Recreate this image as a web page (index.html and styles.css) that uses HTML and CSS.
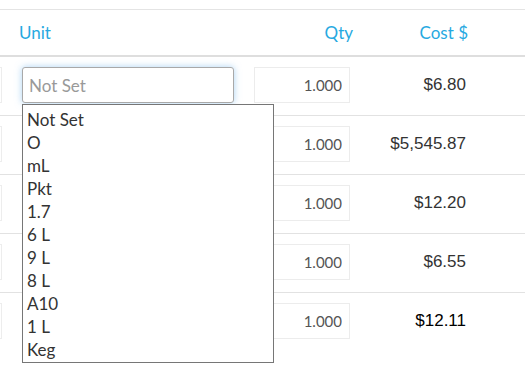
FILE: index.html
```html
<!DOCTYPE html>
<html lang="en">
  <head>
    <meta charset="UTF-8" />
    <meta name="viewport" content="width=device-width, initial-scale=1.0" />
    <title>Recipe Items</title>
    <link rel="stylesheet" href="styles.css">
  </head>
  <body>
    <div class="items-table">
      <div class="item-row head-row">
        <div class="cell stub"></div>
        <div class="cell unit-col">Unit</div>
        <div class="cell qty-col">Qty</div>
        <div class="cell cost-col">Cost $</div>
      </div>

      <div class="item-row">
        <div class="cell stub"><span class="stub-box"></span></div>
        <div class="cell unit-col">
          <div class="unit-select">
            <input type="text" class="unit-input is-focused" placeholder="Not Set" />
            <ul class="unit-options">
              <li>Not Set</li>
              <li>O</li>
              <li>mL</li>
              <li>Pkt</li>
              <li>1.7</li>
              <li>6 L</li>
              <li>9 L</li>
              <li>8 L</li>
              <li>A10</li>
              <li>1 L</li>
              <li>Keg</li>
            </ul>
          </div>
        </div>
        <div class="cell qty-col"><input type="text" class="qty-input" value="1.000" /></div>
        <div class="cell cost-col">$6.80</div>
      </div>

      <div class="item-row">
        <div class="cell stub"><span class="stub-box"></span></div>
        <div class="cell unit-col"><input type="text" class="unit-input" placeholder="Not Set" /></div>
        <div class="cell qty-col"><input type="text" class="qty-input" value="1.000" /></div>
        <div class="cell cost-col">$5,545.87</div>
      </div>

      <div class="item-row">
        <div class="cell stub"><span class="stub-box"></span></div>
        <div class="cell unit-col"><input type="text" class="unit-input" placeholder="Not Set" /></div>
        <div class="cell qty-col"><input type="text" class="qty-input" value="1.000" /></div>
        <div class="cell cost-col">$12.20</div>
      </div>

      <div class="item-row">
        <div class="cell stub"><span class="stub-box"></span></div>
        <div class="cell unit-col"><input type="text" class="unit-input" placeholder="Not Set" /></div>
        <div class="cell qty-col"><input type="text" class="qty-input" value="1.000" /></div>
        <div class="cell cost-col">$6.55</div>
      </div>

      <div class="item-row last-row">
        <div class="cell stub"><span class="stub-box"></span></div>
        <div class="cell unit-col"><input type="text" class="unit-input" placeholder="Not Set" /></div>
        <div class="cell qty-col"><input type="text" class="qty-input" value="1.000" /></div>
        <div class="cell cost-col total">$12.11</div>
      </div>
    </div>
  </body>
</html>
```

FILE: styles.css
```css
html {
  min-height: 100%;
}

body {
  font-family: Lato, "Open Sans", sans-serif;
  background-color: #fff;
  color: #333;
  margin: 0;
  padding-top: 9px;
  min-height: 380px;
  box-sizing: border-box;
}

.items-table {
  border-top: 1px solid #e4e4e4;
}

.item-row {
  display: grid;
  grid-template-columns: 22px 232px 100px 116px 1fr;
  align-items: center;
  padding: 10px 0 12px;
  border-bottom: 1px solid #e2e2e2;
}

.last-row {
  border-bottom: none;
}

.head-row {
  height: 47px;
  padding: 0;
  box-sizing: border-box;
  border-bottom: 2px solid #dedede;
  color: #27a9e1;
  font-size: 17px;
}

.head-row .unit-col {
  margin-left: -3px;
}

.head-row .qty-col {
  padding-right: 1px;
}

.head-row .cost-col {
  padding-right: 2px;
  font-family: Lato, "Open Sans", sans-serif;
  font-size: 17px;
  color: #27a9e1;
}

.qty-col {
  text-align: right;
}

.cost-col {
  text-align: right;
  padding-right: 4px;
  font-family: "Liberation Sans", Arial, sans-serif;
  font-size: 17px;
  color: #333;
}

.cost-col.total {
  color: #000;
}

.stub-box {
  display: block;
  width: 1px;
  height: 34px;
  border: 1px solid #ededed;
  border-left: none;
}

.unit-select {
  position: relative;
  width: 212px;
}

input {
  font-family: Lato, "Open Sans", sans-serif;
  font-size: 17px;
  height: 36px;
  box-sizing: border-box;
  margin: 0;
  outline: none;
}

.unit-input {
  width: 212px;
  padding: 0 6px;
  border: 1px solid #a9a9a9;
  border-radius: 3px;
  color: #555;
}

.unit-input::placeholder {
  color: #999;
}

.unit-input.is-focused {
  box-shadow: 0 0 7px rgba(102, 175, 233, 0.55);
}

.qty-input {
  width: 96px;
  margin-right: 4px;
  padding: 0 7px;
  border: 1px solid #ececec;
  text-align: right;
  color: #555;
  font-size: 15px;
}

.unit-options {
  position: absolute;
  top: calc(100% + 1px);
  left: 0;
  z-index: 10;
  width: 252px;
  box-sizing: border-box;
  list-style: none;
  margin: 0;
  padding: 3px 0 1px;
  background-color: #fff;
  border: 1px solid #767676;
  font-size: 17px;
  color: #333;
}

.unit-options li {
  padding: 0 4px;
  line-height: 23px;
}
```
